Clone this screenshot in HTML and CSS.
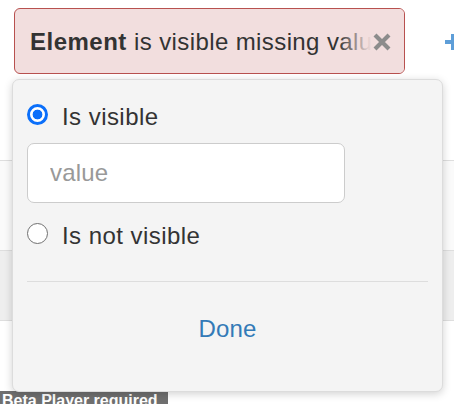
FILE: index.html
```html
<!DOCTYPE html>
<html>
<head>
<meta charset="utf-8">
<link rel="stylesheet" href="styles.css">
</head>
<body>
<div class="page">
  <div class="toolbar">
    <div class="chip">
      <span class="chip-text"><b>Element</b> is visible missing value</span>
      <span class="chip-close">
        <svg width="20" height="20" viewBox="0 0 20 20"><path d="M3 3 L17 17 M17 3 L3 17" stroke="#8c8c8c" stroke-width="4.2" stroke-linecap="butt"/></svg>
      </span>
    </div>
    <span class="plus">
      <svg width="16" height="16" viewBox="0 0 16 16"><path d="M0 8 H16 M8 0 V16" stroke="#5e9ed8" stroke-width="4"/></svg>
    </span>
  </div>
  <div class="rows">
    <div class="row row-a"></div>
    <div class="row row-b"></div>
    <div class="row row-c"></div>
  </div>
  <div class="beta">Beta Player required</div>

  <div class="popover">
    <label class="option first">
      <input type="radio" name="vis" class="radio" checked>
      <span class="option-label">Is visible</span>
    </label>
    <input type="text" class="value-input" placeholder="value">
    <label class="option second">
      <input type="radio" name="vis" class="radio">
      <span class="option-label">Is not visible</span>
    </label>
    <div class="sep"></div>
    <div class="done-area"><button class="done">Done</button></div>
  </div>
</div>
</body>
</html>
```

FILE: styles.css
```css
* { box-sizing: border-box; }
html, body { margin: 0; padding: 0; background: #fff; }
body {
  font-family: "Liberation Sans", Arial, Helvetica, sans-serif;
  color: #333;
}
.page {
  position: relative;
  width: 454px;
  height: 404px;
  overflow: hidden;
}
.toolbar {
  display: flex;
  align-items: center;
  padding: 8px 0 0 14px;
  gap: 40px;
}
.chip {
  position: relative;
  flex: none;
  width: 391px;
  height: 66px;
  border: 1px solid #b8514f;
  border-radius: 6px;
  background: #f2dede;
  display: flex;
  align-items: center;
  padding-left: 15px;
  overflow: hidden;
}
.chip-text {
  font-size: 24px;
  letter-spacing: 0.4px;
  white-space: nowrap;
  color: #333;
  padding-top: 2px;
}
.chip-text b { font-weight: bold; letter-spacing: 0.5px; }
.chip-close {
  position: absolute;
  right: 0;
  top: 0;
  bottom: 0;
  width: 66px;
  display: flex;
  align-items: center;
  justify-content: flex-end;
  padding-right: 12px;
  background: linear-gradient(to right, rgba(242,222,222,0) 0px, rgba(242,222,222,0.85) 28px, #f2dede 34px);
}
.chip-close svg { display: block; margin-top: 1px; }
.plus { flex: none; display: flex; align-items: center; margin-top: 1px; }
.plus svg { display: block; }

.rows { margin-top: 0; }
.row { border-bottom: 1px solid #dedede; }
.row-a { height: 87px; background: #fff; }
.row-b { height: 90px; background: #fafafa; }
.row-c { height: 70px; background: #eeeeee; }

.beta {
  position: absolute;
  left: 0;
  top: 391px;
  height: 20px;
  padding: 0 10px 0 2px;
  background: #6f6f6f;
  color: #fff;
  font-weight: bold;
  font-size: 16px;
  line-height: 20px;
}

.popover {
  position: absolute;
  left: 12px;
  top: 79px;
  width: 431px;
  height: 313px;
  background: #f4f4f4;
  border: 1px solid #dcdcdc;
  border-radius: 7px;
  box-shadow: 0 2px 8px rgba(0,0,0,0.18);
  padding: 0 14px;
  display: flex;
  flex-direction: column;
}
.option {
  display: flex;
  align-items: center;
  gap: 14px;
  height: 30px;
  font-size: 24px;
  letter-spacing: 0.45px;
  color: #333;
}
.option-label { padding-top: 5px; }
.option.first { margin-top: 19px; }
.option.second { margin-top: 15px; }
.radio {
  -webkit-appearance: none;
  appearance: none;
  margin: 0;
  width: 21px;
  height: 21px;
  border-radius: 50%;
  border: 1.6px solid #707070;
  background: #fff;
  flex: none;
}
.radio:checked {
  border: 3px solid #0b6ffa;
  background: radial-gradient(circle, #0b6ffa 0 4.6px, #fff 5.2px);
}
.value-input {
  margin-top: 14px;
  width: 318px;
  height: 60px;
  border: 1px solid #cccccc;
  border-radius: 7px;
  background: #fff;
  padding: 0 0 0 22px;
  font-family: inherit;
  font-size: 24px;
  letter-spacing: 0.2px;
  color: #333;
  outline: none;
}
.value-input::placeholder { color: #999; }
.sep {
  margin-top: 33px;
  height: 1px;
  background: #dddddd;
}
.done-area {
  height: 94px;
  display: flex;
  align-items: center;
  justify-content: center;
}
.done {
  border: none;
  background: none;
  padding: 0;
  font-family: inherit;
  font-size: 24px;
  letter-spacing: 0.2px;
  color: #337ab7;
}
```
